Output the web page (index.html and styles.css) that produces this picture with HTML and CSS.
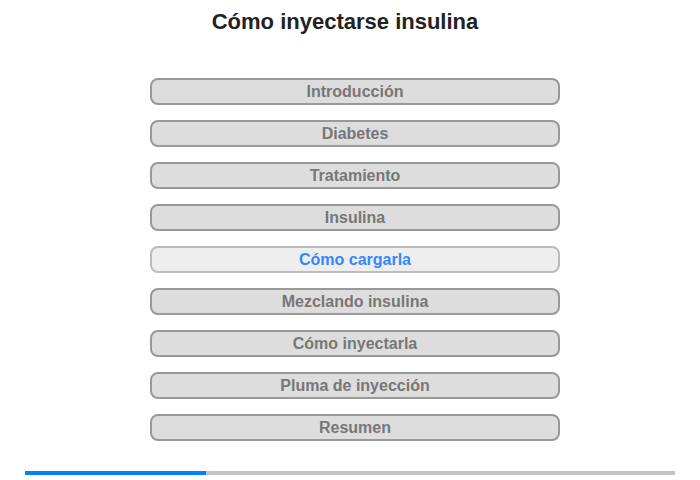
FILE: index.html
```html
<!DOCTYPE html>
<html lang="es">

<head>
    <meta charset="UTF-8">
    <title>Cómo inyectarse insulina</title>
    <link rel="stylesheet" href="styles.css">
</head>

<body>
    <h1>Cómo inyectarse insulina</h1>

    <nav class="menu">
        <button>Introducción</button>
        <button>Diabetes</button>
        <button>Tratamiento</button>
        <button>Insulina</button>
        <button class="valgt">Cómo cargarla</button>
        <button>Mezclando insulina</button>
        <button>Cómo inyectarla</button>
        <button>Pluma de inyección</button>
        <button>Resumen</button>
    </nav>

    <div class="progress">
        <div class="fill"></div>
    </div>
</body>

</html>
```

FILE: styles.css
```css
body {
    margin: 0;
    background-color: #fff;
    font-family: "Liberation Sans", Arial, sans-serif;
}

h1 {
    font-size: 22px;
    font-weight: bold;
    color: #222;
    text-align: center;
    margin: 0;
    padding: 10px 10px 0 0;
    line-height: 24px;
}

.menu {
    display: flex;
    flex-direction: column;
    gap: 15px;
    width: 410px;
    margin: 44px 0 0 150px;
}

button {
    height: 27px;
    border: 2px solid #999;
    border-radius: 8px;
    background-color: #ddd;
    color: #777;
    font-family: "Liberation Sans", Arial, sans-serif;
    font-size: 16px;
    font-weight: bold;
    padding: 0;
    cursor: pointer;
}

.valgt {
    background-color: #eee;
    border-color: #bbb;
    color: #3388ff;
}

.progress {
    display: flex;
    width: 650px;
    height: 4px;
    margin: 30px 0 0 25px;
    background-color: #c4c4c4;
}

.fill {
    width: 181px;
    background-color: #0080ff;
}
```
